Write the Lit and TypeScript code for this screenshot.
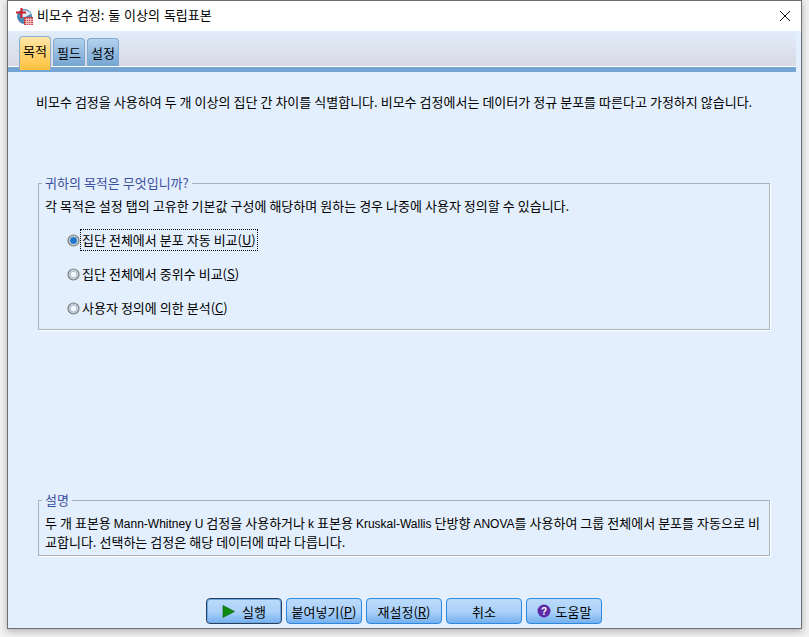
import { LitElement, html, css } from "lit";
import { customElement } from "lit/decorators.js";

@customElement("app-root")
export class AppRoot extends LitElement {
  static styles = css`
    :host {
      display: block;
      width: 809px;
      height: 637px;
      overflow: hidden;
      background: #f0f0f0;
      font-family: "Noto Sans CJK KR", "Liberation Sans", sans-serif;
      font-size: 13px;
      word-spacing: 0.1px;
      color: #000;
    }
    .window {
      margin-left: 7px;
      width: 795px;
      height: 629px;
      box-sizing: border-box;
      border: 1px solid #6f6f6f;
      background: #e3effc;
      display: flex;
      flex-direction: column;
      box-shadow: 0 2px 7px rgba(0, 0, 0, 0.28);
    }
    .title {
      height: 30px;
      flex: none;
      background: #fff;
      display: flex;
      align-items: center;
      padding-left: 8px;
      gap: 4px;
    }
    .title svg.logo { flex: none; }
    .title .t { flex: 1; line-height: 18px; padding-bottom: 2px; word-spacing: 1px; }
    .close { width: 30px; height: 30px; margin-right: 1px; display: flex; align-items: center; justify-content: center; }
    .tabbar {
      flex: none;
      margin-right: 5px;
      height: 41px;
      box-sizing: border-box;
      padding: 5px 0 0 11px;
      background: linear-gradient(#e2edfa, #d8d8e4);
      border-bottom: 5px solid #74a5d3;
      display: flex;
      align-items: flex-start;
      gap: 2px;
      position: relative;
    }
    .tabbar::after {
      content: "";
      position: absolute;
      left: 0;
      right: 0;
      bottom: 0;
      height: 1px;
      background: #fff;
    }
    .tab {
      box-sizing: border-box;
      width: 32px;
      height: 29px;
      margin-top: 2px;
      border: 1px solid #7fa9cf;
      border-bottom: none;
      border-radius: 4px 4px 0 0;
      background: linear-gradient(#b3d2ee, #72a3d1);
      display: flex;
      align-items: center;
      justify-content: center;
      line-height: 16px;
    }
    .tab.on {
      height: 34px;
      margin-top: 0;
      border-color: #89aed0;
      background: linear-gradient(#ffe6a6, #ffc13d);
      position: relative;
      z-index: 1;
      padding-bottom: 6px;
    }
    .body {
      flex: 1;
      display: flex;
      flex-direction: column;
      padding: 0 31px 0 30px;
      min-height: 0;
    }
    .intro { margin: 21px 0 0 -2px; line-height: 18px; white-space: nowrap; }
    fieldset {
      margin: 0;
      padding: 0;
      border: 1px solid #a9b2bf;
      border-radius: 0;
      min-width: 0;
      box-shadow: 1px 1px 0 #fff;
    }
    legend {
      margin-left: 3px;
      padding: 0 3px;
      color: #3c4fa0;
      line-height: 16px;
    }
    .purpose { margin-top: 64px; height: 155px; box-sizing: border-box; }
    .purpose p { margin: 6px 0 0 6px; line-height: 18px; }
    .radios { display: flex; flex-direction: column; gap: 12px; margin: 14px 0 0 28px; }
    .radio { display: flex; align-items: center; height: 22px; }
    .radio span {
      padding: 0 1px;
      border: 1px dotted transparent;
      line-height: 20px;
      white-space: nowrap;
    }
    .radio.on span { border-color: #000; }
    u { text-underline-offset: 1px; }
    .desc { margin-top: auto; height: 64px; box-sizing: border-box; }
    .desc p { margin: 5px 0 0 6px; line-height: 19px; width: 722px; }
    .lat { font-family: "Liberation Sans", sans-serif; font-size: 12px; line-height: 1; }
    .buttons {
      flex: none;
      height: 72px;
      display: flex;
      justify-content: center;
      align-items: flex-start;
      gap: 4px;
      padding: 42px 1px 0 0;
      box-sizing: border-box;
    }
    button {
      box-sizing: border-box;
      width: 76px;
      height: 26px;
      padding: 0;
      border: 1px solid #2f87dd;
      border-radius: 4px;
      background: linear-gradient(#bcdcfb, #a9d0f8 55%, #74b0ef);
      font: inherit;
      color: #000;
      display: flex;
      align-items: center;
      justify-content: center;
      gap: 5px;
    }
    button.def { border-color: #27425f; box-shadow: inset 0 0 0 1px #6fa8e4; gap: 7px; }
  `;

  private radio(label: string, key: string, on = false) {
    return html`<div class="radio ${on ? "on" : ""}">
      <svg width="13" height="13" viewBox="0 0 13 13">
        <circle cx="6.5" cy="6.5" r="5.5" fill="#c9d3dc" stroke="#7d7d7d" stroke-width="1.2"></circle>
        <circle cx="6.5" cy="6.5" r="3.4" fill="${on ? "#1f74cf" : "#f4f9ff"}" stroke="${on ? "#5d93c9" : "#a9bcd0"}"></circle>
      </svg>
      <span>${label}(<u>${key}</u>)</span>
    </div>`;
  }

  render() {
    return html`<div class="window">
      <div class="title">
        <svg class="logo" width="17" height="17" viewBox="0 0 17 17">
          <circle cx="8.5" cy="8.5" r="7.5" fill="#4d88b4"></circle>
          <path d="M6 3a7 7 0 0 1 9 3L9 9H6z" fill="#dbe9f3"></path>
          <path d="M5.5 0v10M0 4.5h10" stroke="#d0202c" stroke-width="2" fill="none"></path>
          <rect x="8" y="9" width="9" height="8" fill="#c8424a"></rect>
          <path d="M9 11.5h8M9 13.5h8M9 15.5h8M10.7 10v7M12.7 10v7M14.7 10v7" stroke="#f3d3d3" stroke-width="0.8"></path>
        </svg>
        <div class="t">비모수 검정: 둘 이상의 독립표본</div>
        <div class="close">
          <svg width="12" height="12" viewBox="0 0 12 12"><path d="M1 1l10 10M11 1L1 11" stroke="#111" stroke-width="1" fill="none"></path></svg>
        </div>
      </div>
      <div class="tabbar">
        <div class="tab on">목적</div>
        <div class="tab">필드</div>
        <div class="tab">설정</div>
      </div>
      <div class="body">
        <div class="intro">비모수 검정을 사용하여 두 개 이상의 집단 간 차이를 식별합니다. 비모수 검정에서는 데이터가 정규 분포를 따른다고 가정하지 않습니다.</div>
        <fieldset class="purpose">
          <legend>귀하의 목적은 무엇입니까?</legend>
          <p>각 목적은 설정 탭의 고유한 기본값 구성에 해당하며 원하는 경우 나중에 사용자 정의할 수 있습니다.</p>
          <div class="radios">
            ${this.radio("집단 전체에서 분포 자동 비교", "U", true)}
            ${this.radio("집단 전체에서 중위수 비교", "S")}
            ${this.radio("사용자 정의에 의한 분석", "C")}
          </div>
        </fieldset>
        <fieldset class="desc">
          <legend>설명</legend>
          <p>두 개 표본용 <span class="lat">Mann-Whitney U</span> 검정을 사용하거나 <span class="lat">k</span> 표본용 <span class="lat">Kruskal-Wallis</span> 단방향 <span class="lat">ANOVA</span>를 사용하여 그룹 전체에서 분포를 자동으로 비교합니다. 선택하는 검정은 해당 데이터에 따라 다릅니다.</p>
        </fieldset>
      </div>
      <div class="buttons">
        <button class="def">
          <svg width="13" height="13" viewBox="0 0 13 13"><path d="M1 0.5L12.5 6.5L1 12.5z" fill="#0f8a0f" stroke="#0b5e0b" stroke-width="0.6"></path></svg>
          <span>실행</span>
        </button>
        <button><span>붙여넣기(<u>P</u>)</span></button>
        <button><span>재설정(<u>R</u>)</span></button>
        <button><span>취소</span></button>
        <button>
          <svg width="14" height="14" viewBox="0 0 14 14"><circle cx="7" cy="7" r="6.5" fill="#5f2aa6"></circle><text x="7" y="10.5" text-anchor="middle" font-size="10" font-weight="700" font-family="Liberation Sans" fill="#fff">?</text></svg>
          <span>도움말</span>
        </button>
      </div>
    </div>`;
  }
}
